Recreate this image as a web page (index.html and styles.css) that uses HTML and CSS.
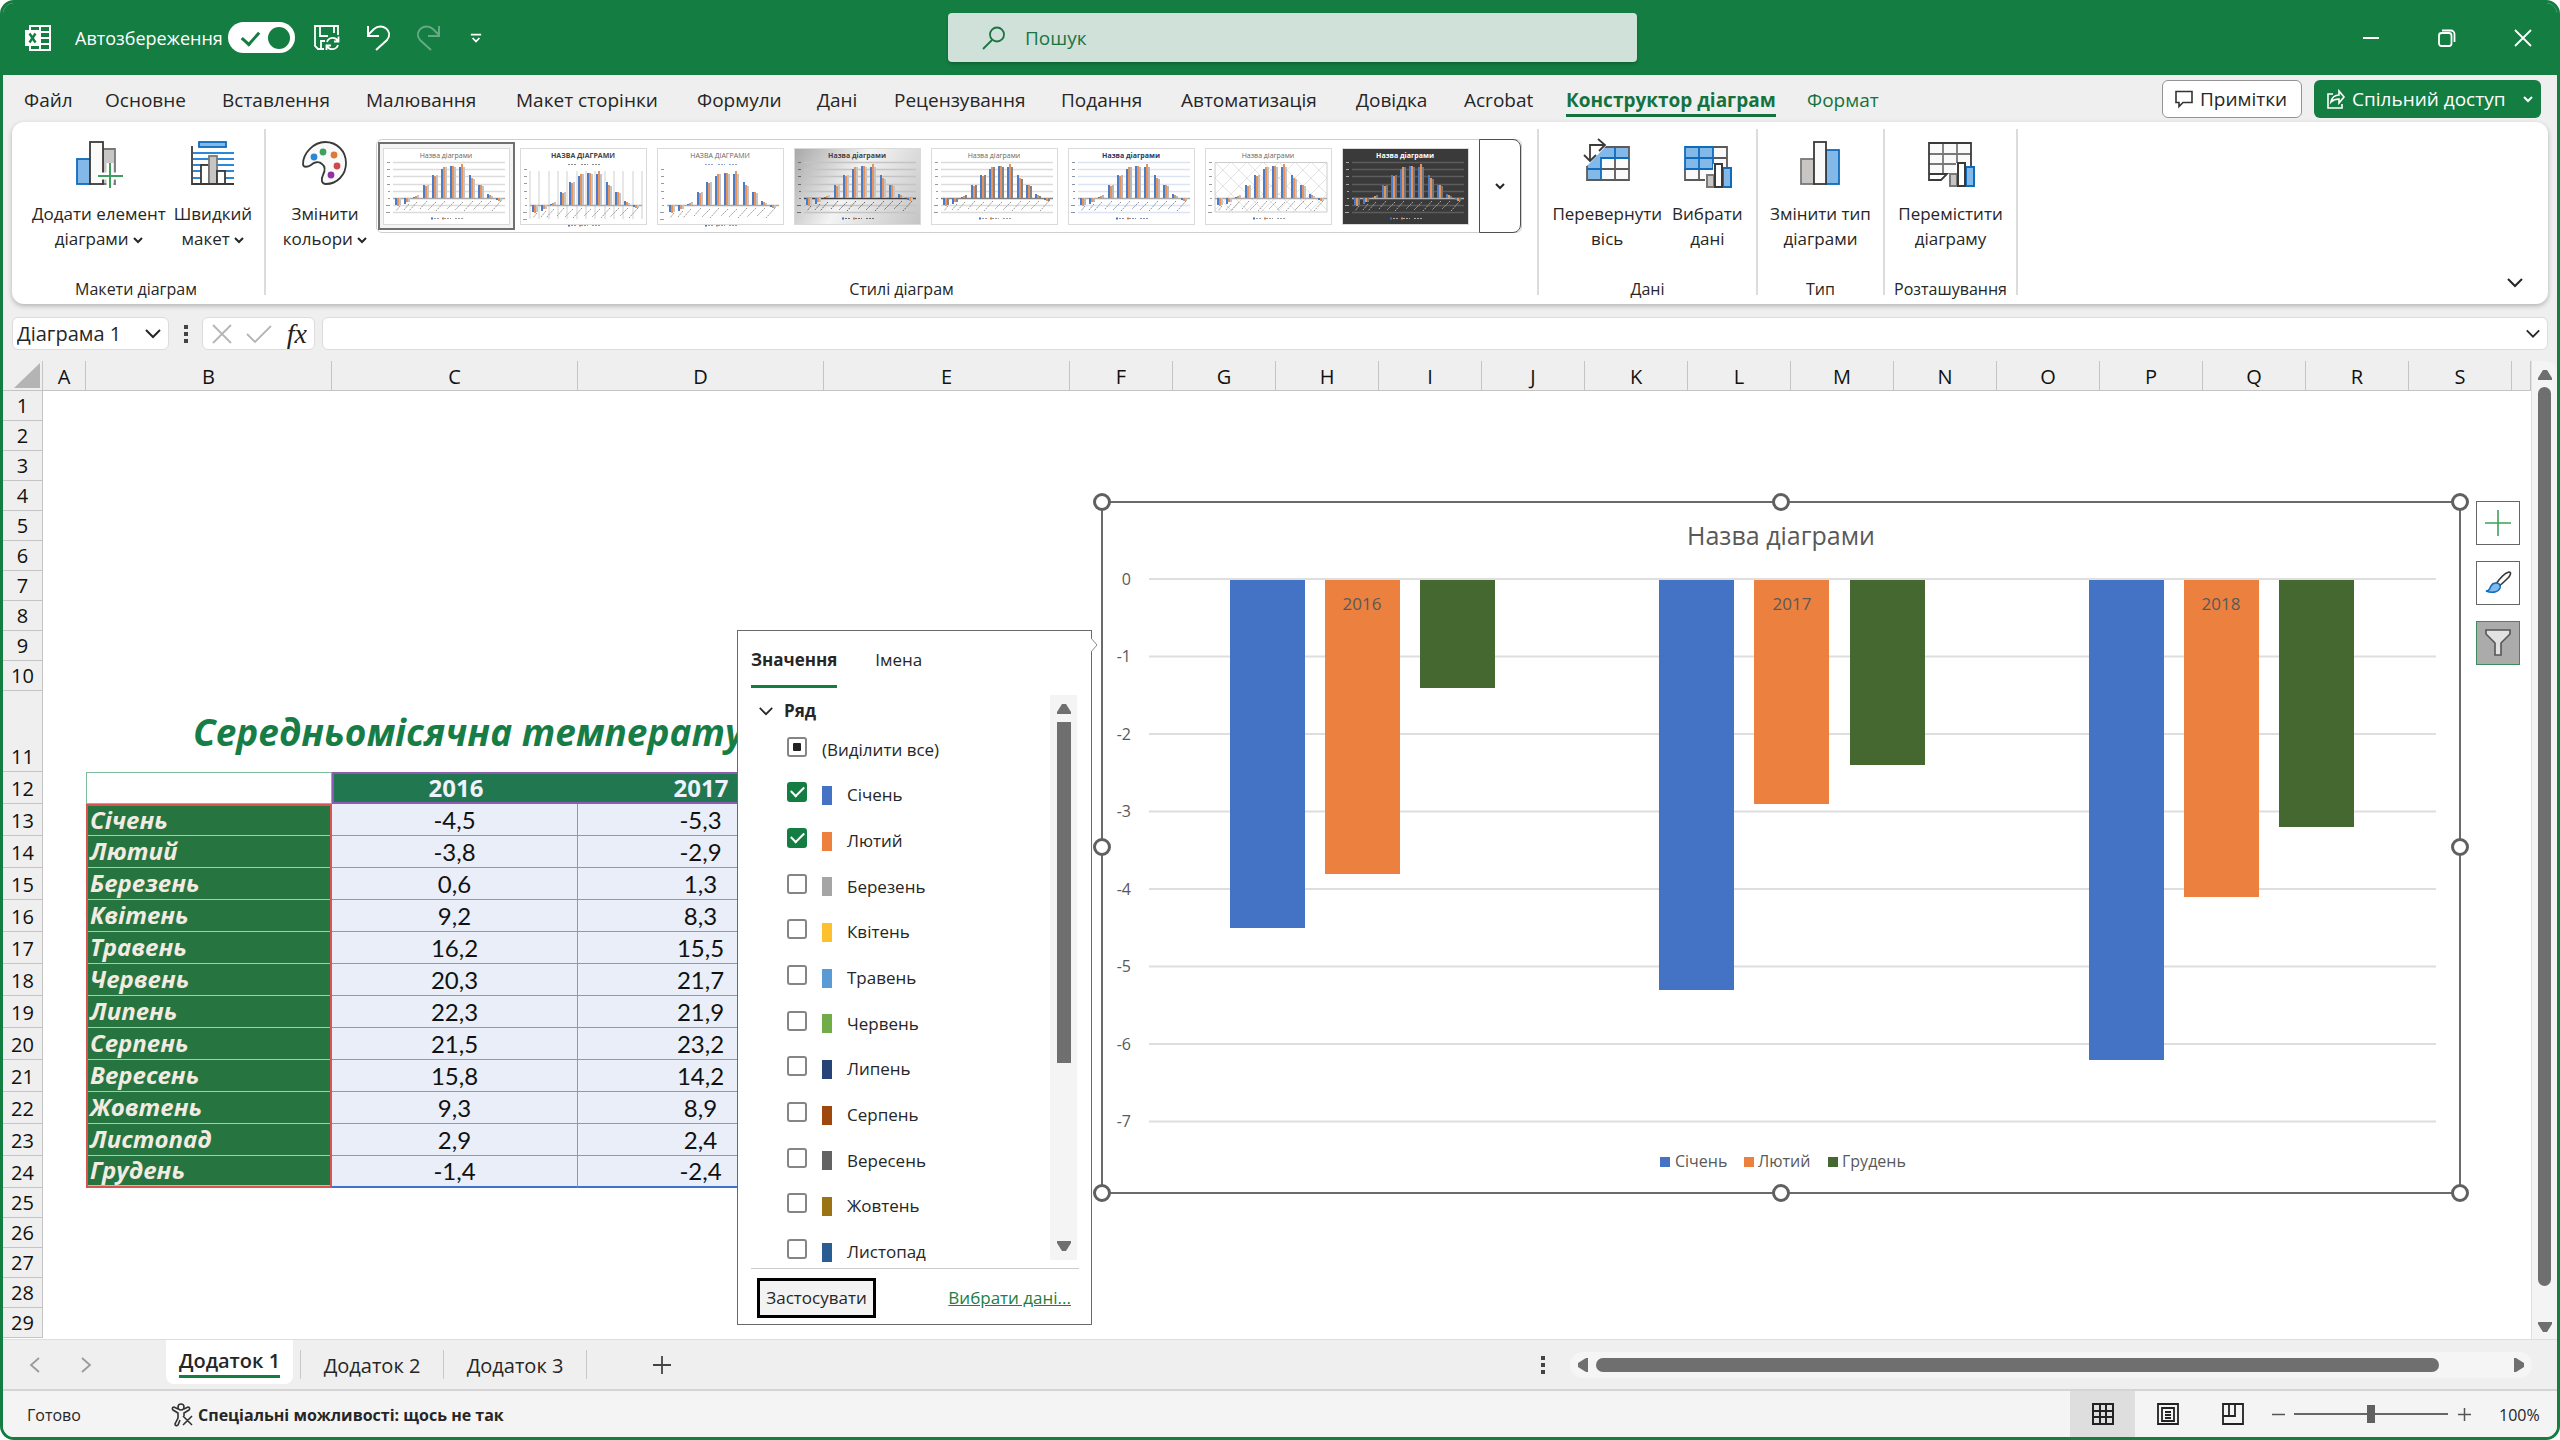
FILE: index.html
```html
<!DOCTYPE html>
<html lang="uk">
<head>
<meta charset="utf-8">
<title>Excel</title>
<link rel="stylesheet" href="styles.css">
</head>
<body>
<svg class="defs" aria-hidden="true">
  <symbol id="chev" viewBox="0 0 10 10"><path d="M1 3l4 4 4-4" fill="none" stroke="currentColor" stroke-width="2"/></symbol>
  <symbol id="chev-wide" viewBox="0 0 18 10"><path d="M2 1l7 7 7-7" fill="none" stroke="currentColor" stroke-width="2"/></symbol>
  <symbol id="mini-grid" viewBox="0 0 125 75"><path d="M9 13.500H121M9 20.500H121M9 27.500H121M9 35.500H121M9 42.500H121M9 56.500H121M9 63.500H121" fill="none" stroke="var(--grid)" stroke-width="1.500"/></symbol>
  <symbol id="mini-bars" viewBox="0 0 125 75">
    <path d="M9 49.500H121" stroke="var(--axis)" stroke-width="1.500"/>
    <path d="M12 49v7M21 49v6M30 49v-1M40 49v-13M49 49v-23M58 49v-29M67 49v-32M76 49v-31M86 49v-23M95 49v-13M104 49v-4M113 49v2" stroke="#4a7cc9" stroke-width="2"/>
    <path d="M14 49v8M23 49v4M32 49v-2M42 49v-12M51 49v-22M60 49v-31M69 49v-32M78 49v-34M88 49v-20M97 49v-13M106 49v-3M115 49v3" stroke="#e6935c" stroke-width="2"/>
    <path d="M16 49v7M25 49v4M34 49v-3M44 49v-13M53 49v-23M62 49v-31M71 49v-31M80 49v-31M90 49v-19M99 49v-12M108 49v-2M117 49v3" stroke="var(--third)" stroke-width="2"/>
    <path d="M16 57l-4 5M25 55l-5 6M33 53l-8 9M43 52l-7 8M52 53l-8 8M61 52l-9 10M70 53l-7 7M79 53l-8 8M89 52l-9 10M98 52l-9 9M107 52l-8 8M117 52l-9 10" fill="none" stroke="var(--ink)" stroke-dasharray="2 1"/>
    <path d="M3 13.500h3M3 20.500h3M3 27.500h3M3 35.500h3M4 42.500h2M4 49.500h2M2 56.500h4M2 63.500h4" stroke="var(--ink)"/>
    <path d="M47 69.500h8M60 69.500h7M71 69.500h9" stroke="var(--ink)" stroke-dasharray="2 1"/>
    <path d="M47 69.500h2" stroke="#4472c4" stroke-width="2"/><path d="M58 69.500h2" stroke="#ed7d31" stroke-width="2"/>
  </symbol>
  <symbol id="small-chart" viewBox="0 0 26 26"><path d="M-1 13h8v-11h10v4h9v20H-1z" fill="#fff"/><rect x="1" y="13" width="7" height="12" fill="#c8c6c4" stroke="#7a7876" stroke-width="2"/><rect x="17" y="6" width="8" height="19" fill="#83b9e9" stroke="#0f6cbd" stroke-width="2"/><rect x="9" y="2" width="7" height="23" fill="#fff" stroke="#3b3a39" stroke-width="2"/></symbol>
</svg>

<div class="window">
  <header class="titlebar">
    <div class="quick">
      <svg class="logo" width="26" height="26" viewBox="0 0 26 26"><path d="M5 1h20v24H5z" fill="none" stroke="#fff" stroke-width="2"/><path d="M15 1v24M15 7h10M15 13h10M15 19h10" stroke="#fff" stroke-width="2"/><path d="M0 5h15v16H0z" fill="#fff"/><path d="M4.500 8.500l6 9M10.500 8.500l-6 9" stroke="#147d41" stroke-width="2.400"/></svg>
      <label class="autosave" for="autosave">Автозбереження</label>
      <input class="toggle" type="checkbox" id="autosave" checked>
      <button class="qbtn" aria-label="Зберегти"><svg width="26" height="26" viewBox="0 0 26 26" fill="none" stroke="#fff" stroke-width="1.800"><path d="M10 24H4L1 21V1h23v9M6 1v10h8M20 1v7M7 24v-8h4"/><path d="M24 16a6 6 0 0 0-11 1M13 21a6 6 0 0 0 11-1M24.500 11.500V16.500H20M12.500 25V20.500H17"/></svg></button>
      <button class="qbtn" aria-label="Скасувати"><svg width="26" height="26" viewBox="0 0 26 26" fill="none" stroke="#fff" stroke-width="2"><path d="M3 1v10h11M3 10l6-6c8-7 20 2 13 11L11 25"/></svg></button>
      <button class="qbtn faded" aria-label="Повторити"><svg width="26" height="26" viewBox="0 0 26 26" fill="none" stroke="#fff" stroke-width="2"><path d="M23 1v10H12M23 10l-6-6C9-3-3 6 4 15l11 10"/></svg></button>
      <button class="qbtn narrow" aria-label="Налаштувати"><svg width="12" height="12" viewBox="0 0 14 12" fill="none" stroke="#fff" stroke-width="2"><path d="M1 2h12M3 6l4 4 4-4"/></svg></button>
    </div>
    <div class="search">
      <svg width="24" height="24" viewBox="0 0 24 24" fill="none" stroke="#1b7444" stroke-width="1.800"><circle cx="15" cy="8.500" r="7"/><path d="M10 14L1 23"/></svg>
      <input type="text" placeholder="Пошук" aria-label="Пошук">
    </div>
    <div class="winctl">
      <button aria-label="Згорнути"><svg width="16" height="16" viewBox="0 0 16 16"><path d="M0 8h16" stroke="#fff" stroke-width="2"/></svg></button>
      <button aria-label="Відновити"><svg width="18" height="18" viewBox="0 0 18 18" fill="none" stroke="#fff" stroke-width="1.800"><rect x="1" y="4" width="12.500" height="13" rx="2.500"/><path d="M4 1.500h9a3.500 3.500 0 0 1 3.500 3.500v8"/></svg></button>
      <button aria-label="Закрити"><svg width="18" height="18" viewBox="0 0 18 18"><path d="M1 1l16 16M17 1L1 17" stroke="#fff" stroke-width="1.800"/></svg></button>
    </div>
  </header>

  <nav class="tabs">
    <div class="tablist">
      <a href="#">Файл</a><a href="#">Основне</a><a href="#">Вставлення</a><a href="#">Малювання</a><a href="#">Макет сторінки</a><a href="#">Формули</a><a href="#">Дані</a><a href="#">Рецензування</a><a href="#">Подання</a><a href="#">Автоматизація</a><a href="#">Довідка</a><a href="#">Acrobat</a><a href="#" class="active">Конструктор діаграм</a><a href="#" class="ctx">Формат</a>
    </div>
    <button class="comments"><svg width="18" height="18" viewBox="0 0 18 18" fill="none" stroke="#333" stroke-width="1.600"><path d="M1 1.500h16v11H8l-4 4v-4H1z"/></svg>Примітки</button>
    <button class="share"><svg width="18" height="20" viewBox="0 0 18 20" fill="none" stroke="#fff" stroke-width="1.600"><path d="M6 5H1v14h14v-4M4 13c1-5 4-7 8-7V2l5 6-5 6v-4c-4 0-6 1-8 3z"/></svg>Спільний доступ<svg class="share-chev" width="10" height="10"><use href="#chev"/></svg></button>
  </nav>

  <section class="ribbon">
    <div class="group g-layouts">
      <div class="tools">
        <button class="tool"><svg width="48" height="48" viewBox="0 0 48 48"><rect x="2" y="20" width="13" height="25" fill="#83b9e9" stroke="#0f6cbd" stroke-width="1.800"/><path d="M28 10h12v35H28z" fill="#c8c6c4" stroke="#7a7876" stroke-width="1.800"/><rect x="15" y="3" width="13" height="42" fill="#fafafa" stroke="#3b3a39" stroke-width="1.800"/><path d="M35 24v26M22 37h27" stroke="#fff" stroke-width="7"/><path d="M35 24v25M23 37h25" stroke="#3da15b" stroke-width="2"/></svg><span>Додати елемент<br>діаграми <svg class="c" width="10" height="10"><use href="#chev"/></svg></span></button>
        <button class="tool"><svg width="48" height="48" viewBox="0 0 48 48"><rect x="10" y="3" width="27" height="5" fill="#83b9e9" stroke="#0f6cbd" stroke-width="1.800"/><path d="M4 14h41M4 20h41M4 26h41M4 32h41M4 39h41" stroke="#2b88d8" stroke-width="1.800"/><rect x="12" y="26" width="8" height="19" fill="#fff" stroke="#3b3a39" stroke-width="1.800"/><rect x="20" y="17" width="8" height="28" fill="#c8c6c4" stroke="#7a7876" stroke-width="1.800"/><rect x="28" y="32" width="8" height="13" fill="#fff" stroke="#3b3a39" stroke-width="1.800"/><path d="M3 7v38h42" fill="none" stroke="#3b3a39" stroke-width="1.800"/></svg><span>Швидкий<br>макет <svg class="c" width="10" height="10"><use href="#chev"/></svg></span></button>
      </div>
      <p>Макети діаграм</p>
    </div>
    <div class="group g-styles">
      <div class="tools">
        <button class="tool"><svg width="48" height="48" viewBox="0 0 48 48"><path d="M24 3C13 3 2 14 2 25c0 4 5 3 8 1 3-3 8-4 11-1 4 3 3 7 1 11-2 4-2 9 3 9 11 0 20-9 20-21S36 3 24 3z" fill="#fafafa" stroke="#3b3a39" stroke-width="1.800"/><circle cx="13" cy="18" r="3.400" fill="#2b88d8"/><circle cx="22" cy="13" r="3.400" fill="#3da15b"/><circle cx="33" cy="16" r="3.400" fill="#dd7a3a"/><circle cx="36" cy="27" r="3.400" fill="#d0474c"/><circle cx="30" cy="36" r="3.400" fill="#9030a8"/></svg><span>Змінити<br>кольори <svg class="c" width="10" height="10"><use href="#chev"/></svg></span></button>
        <div class="gallery">
          <button class="style selected" aria-label="Стиль 1"><svg class="mini" viewBox="0 0 125 75"><text x="62" y="9">Назва діаграми</text><use href="#mini-grid"/><use href="#mini-bars"/></svg></button>
          <button class="style" aria-label="Стиль 2"><svg class="mini" viewBox="0 0 125 75"><text x="62" y="9" class="b">НАЗВА ДІАГРАМИ</text><path d="M9 22v48M18 22v48M28 22v48M37 22v48M46 22v48M56 22v48M65 22v48M74 22v48M84 22v48M93 22v48M102 22v48M112 22v48M121 22v48" stroke="#d0d0d0"/><path d="M47 15.500h8M60 15.500h7M71 15.500h9" stroke="#888" stroke-dasharray="2 1"/><use href="#mini-bars" y="7"/></svg></button>
          <button class="style" aria-label="Стиль 3"><svg class="mini" viewBox="0 0 125 75"><text x="62" y="9">НАЗВА ДІАГРАМИ</text><path d="M47 15.500h8M60 15.500h7M71 15.500h9" stroke="#8aa4cc" stroke-dasharray="2 1"/><use href="#mini-bars" y="7"/></svg></button>
          <button class="style" aria-label="Стиль 4"><svg class="mini silver" viewBox="0 0 125 75"><text x="62" y="9" class="b">Назва діаграми</text><use href="#mini-grid"/><use href="#mini-bars"/></svg></button>
          <button class="style" aria-label="Стиль 5"><svg class="mini thick" viewBox="0 0 125 75"><text x="62" y="9">Назва діаграми</text><use href="#mini-grid"/><use href="#mini-bars"/></svg></button>
          <button class="style" aria-label="Стиль 6"><svg class="mini blue" viewBox="0 0 125 75"><text x="62" y="9" class="b">Назва діаграми</text><use href="#mini-grid"/><use href="#mini-bars"/></svg></button>
          <button class="style" aria-label="Стиль 7"><svg class="mini" viewBox="0 0 125 75"><text x="62" y="9">Назва діаграми</text><path d="M9 13L59 63M25 13L75 63M41 13L91 63M57 13l50 50M73 13l48 48M89 13l32 32M105 13l16 16M9 29l34 34M9 45l18 18M25 13L9 29M41 13L9 45M57 13L9 61M73 13L23 63M89 13L39 63M105 13L55 63M121 13L71 63M121 29L87 63M121 45l-18 18" stroke="#e4e4e4"/><path d="M9 13.500H121V63H9z" fill="none" stroke="#ccc"/><use href="#mini-bars"/></svg></button>
          <button class="style" aria-label="Стиль 8"><svg class="mini dark" viewBox="0 0 125 75"><text x="62" y="9" class="b">Назва діаграми</text><use href="#mini-grid"/><use href="#mini-bars"/></svg></button>
          <button class="more" aria-label="Додатково"><svg width="10" height="10"><use href="#chev"/></svg></button>
        </div>
      </div>
      <p>Стилі діаграм</p>
    </div>
    <div class="group g-data">
      <div class="tools">
        <button class="tool"><svg width="50" height="48" viewBox="0 0 50 48"><rect x="5" y="8" width="42" height="33" fill="#fafafa"/><path d="M5 8h42v11H19v22H5z" fill="#83b9e9"/><path d="M5 41h42V8H5zM19 30h28M33 19v22" fill="none" stroke="#5b5a59" stroke-width="1.800"/><path d="M19 41V19h28M5 30h14M33 8v11" fill="none" stroke="#0f6cbd" stroke-width="1.800"/><path d="M0 4h27L5 27H0z" fill="#fff"/><path d="M8 21V6h15M16 0l7 6-6 6M2 16l6 6 6-6" fill="none" stroke="#3b3a39" stroke-width="1.800"/></svg><span>Перевернути<br>вісь</span></button>
        <button class="tool"><svg width="50" height="48" viewBox="0 0 50 48"><path d="M3 8h42v32H3z" fill="#fafafa"/><path d="M3 8h28v22H3z" fill="#83b9e9"/><path d="M45 28V8H31M31 19h14M3 30v11h20M17 30v11" fill="none" stroke="#5b5a59" stroke-width="1.800"/><path d="M3 8h28v22H3zM3 19h28M17 8v22" fill="none" stroke="#0f6cbd" stroke-width="1.800"/><use href="#small-chart" x="24" y="23" width="26" height="26"/></svg><span>Вибрати<br>дані</span></button>
      </div>
      <p>Дані</p>
    </div>
    <div class="group g-type">
      <div class="tools">
        <button class="tool"><svg width="48" height="48" viewBox="0 0 48 48"><rect x="5" y="20" width="13" height="25" fill="#c8c6c4" stroke="#7a7876" stroke-width="1.800"/><rect x="30" y="11" width="13" height="34" fill="#83b9e9" stroke="#0f6cbd" stroke-width="1.800"/><rect x="18" y="3" width="12" height="42" fill="#fafafa" stroke="#3b3a39" stroke-width="1.800"/></svg><span>Змінити тип<br>діаграми</span></button>
      </div>
      <p>Тип</p>
    </div>
    <div class="group g-place">
      <div class="tools">
        <button class="tool"><svg width="50" height="48" viewBox="0 0 50 48"><path d="M4 4h42v22H30v9H4z" fill="#fafafa"/><path d="M4 15h42M4 25h28M18 4v31M32 4v22" fill="none" stroke="#7a7876" stroke-width="1.800"/><path d="M46 28V4H4v37h12l6-6H4" fill="none" stroke="#3b3a39" stroke-width="1.800"/><use href="#small-chart" x="24" y="22" width="26" height="26"/></svg><span>Перемістити<br>діаграму</span></button>
      </div>
      <p>Розташування</p>
    </div>
    <button class="collapse" aria-label="Згорнути стрічку"><svg width="18" height="10"><use href="#chev-wide"/></svg></button>
  </section>

  <div class="formula">
    <div class="namebox"><input type="text" value="Діаграма 1" aria-label="Ім'я"><svg width="18" height="10"><use href="#chev-wide"/></svg></div>
    <span class="dots"><i></i><i></i><i></i></span>
    <div class="fxbox">
      <button aria-label="Скасувати"><svg width="20" height="20" viewBox="0 0 20 20"><path d="M1 1l18 18M19 1L1 19" stroke="#b5b5b5" stroke-width="1.800"/></svg></button>
      <button aria-label="Ввести"><svg width="26" height="18" viewBox="0 0 26 18"><path d="M1 9l8 8L25 1" fill="none" stroke="#b5b5b5" stroke-width="1.800"/></svg></button>
      <button class="fx" aria-label="Вставити функцію">fx</button>
    </div>
    <div class="fbar"><input type="text" aria-label="Рядок формул"><svg width="16" height="10" viewBox="0 0 18 10"><use href="#chev-wide"/></svg></div>
  </div>

  <main class="workspace">
    <div class="sheet">
      <table class="grid">
        <colgroup><col class="c-row"><col class="c-a"><col class="c-wide"><col class="c-wide"><col class="c-wide"><col class="c-wide"><col class="c-n" span="14"><col></colgroup>
        <thead><tr><th class="corner"><svg width="26" height="25" viewBox="0 0 26 25"><path d="M26 0v25H0z" fill="#b4b4b4"/></svg></th><th>A</th><th>B</th><th>C</th><th>D</th><th>E</th><th>F</th><th>G</th><th>H</th><th>I</th><th>J</th><th>K</th><th>L</th><th>M</th><th>N</th><th>O</th><th>P</th><th>Q</th><th>R</th><th>S</th><th></th></tr></thead>
        <tbody>
          <tr><th>1</th><td colspan="20"></td></tr>
          <tr><th>2</th><td colspan="20"></td></tr>
          <tr><th>3</th><td colspan="20"></td></tr>
          <tr><th>4</th><td colspan="20"></td></tr>
          <tr><th>5</th><td colspan="20"></td></tr>
          <tr><th>6</th><td colspan="20"></td></tr>
          <tr><th>7</th><td colspan="20"></td></tr>
          <tr><th>8</th><td colspan="20"></td></tr>
          <tr><th>9</th><td colspan="20"></td></tr>
          <tr><th>10</th><td colspan="20"></td></tr>
          <tr class="heading"><th>11</th><td></td><td colspan="4" class="title">Середньомісячна температура</td><td colspan="15"></td></tr>
          <tr class="years"><th>12</th><td></td><td class="blank"></td><td class="y first">2016</td><td class="y">2017</td><td class="y">2018</td><td colspan="15"></td></tr>
          <tr class="d"><th>13</th><td></td><td class="m top">Січень</td><td>-4,5</td><td>-5,3</td><td></td></tr>
          <tr class="d"><th>14</th><td></td><td class="m">Лютий</td><td>-3,8</td><td>-2,9</td><td></td></tr>
          <tr class="d"><th>15</th><td></td><td class="m">Березень</td><td>0,6</td><td>1,3</td><td></td></tr>
          <tr class="d"><th>16</th><td></td><td class="m">Квітень</td><td>9,2</td><td>8,3</td><td></td></tr>
          <tr class="d"><th>17</th><td></td><td class="m">Травень</td><td>16,2</td><td>15,5</td><td></td></tr>
          <tr class="d"><th>18</th><td></td><td class="m">Червень</td><td>20,3</td><td>21,7</td><td></td></tr>
          <tr class="d"><th>19</th><td></td><td class="m">Липень</td><td>22,3</td><td>21,9</td><td></td></tr>
          <tr class="d"><th>20</th><td></td><td class="m">Серпень</td><td>21,5</td><td>23,2</td><td></td></tr>
          <tr class="d"><th>21</th><td></td><td class="m">Вересень</td><td>15,8</td><td>14,2</td><td></td></tr>
          <tr class="d"><th>22</th><td></td><td class="m">Жовтень</td><td>9,3</td><td>8,9</td><td></td></tr>
          <tr class="d"><th>23</th><td></td><td class="m">Листопад</td><td>2,9</td><td>2,4</td><td></td></tr>
          <tr class="d last"><th>24</th><td></td><td class="m">Грудень</td><td>-1,4</td><td>-2,4</td><td></td></tr>
          <tr><th>25</th><td colspan="20"></td></tr>
          <tr><th>26</th><td colspan="20"></td></tr>
          <tr><th>27</th><td colspan="20"></td></tr>
          <tr><th>28</th><td colspan="20"></td></tr>
          <tr><th>29</th><td colspan="20"></td></tr>
        </tbody>
      </table>

      <svg class="chart" width="1378" height="712" viewBox="1092 491 1378 712">
        <rect x="1102" y="502" width="1358" height="691" fill="#fff" stroke="#6a6a6a" stroke-width="2"/>
        <g stroke="#dedede" stroke-width="2"><path d="M1149 579H2436M1149 656.500H2436M1149 734H2436M1149 811.500H2436M1149 889H2436M1149 966.500H2436M1149 1044H2436M1149 1121.500H2436"/></g>
        <g fill="#4472c4"><rect x="1230" y="580" width="75" height="348"/><rect x="1659" y="580" width="75" height="410"/><rect x="2089" y="580" width="75" height="480"/></g>
        <g fill="#ec803e"><rect x="1325" y="580" width="75" height="294"/><rect x="1754" y="580" width="75" height="224"/><rect x="2184" y="580" width="75" height="317"/></g>
        <g fill="#44682f"><rect x="1420" y="580" width="75" height="108"/><rect x="1850" y="580" width="75" height="185"/><rect x="2279" y="580" width="75" height="247"/></g>
        <text class="ct" x="1781" y="545">Назва діаграми</text>
        <g class="val"><text x="1131" y="585">0</text><text x="1131" y="662">-1</text><text x="1131" y="740">-2</text><text x="1131" y="817">-3</text><text x="1131" y="895">-4</text><text x="1131" y="972">-5</text><text x="1131" y="1050">-6</text><text x="1131" y="1127">-7</text></g>
        <g class="cat"><text x="1362" y="610">2016</text><text x="1792" y="610">2017</text><text x="2221" y="610">2018</text></g>
        <rect x="1660" y="1157" width="10" height="10" fill="#4472c4"/><rect x="1744" y="1157" width="10" height="10" fill="#ec803e"/><rect x="1828" y="1157" width="10" height="10" fill="#44682f"/>
        <g class="leg"><text x="1675" y="1167">Січень</text><text x="1758" y="1167">Лютий</text><text x="1842" y="1167">Грудень</text></g>
        <g fill="#fff" stroke="#606060" stroke-width="3"><circle cx="1102" cy="502" r="7.500"/><circle cx="1781" cy="502" r="7.500"/><circle cx="2460" cy="502" r="7.500"/><circle cx="1102" cy="847" r="7.500"/><circle cx="2460" cy="847" r="7.500"/><circle cx="1102" cy="1193" r="7.500"/><circle cx="1781" cy="1193" r="7.500"/><circle cx="2460" cy="1193" r="7.500"/></g>
      </svg>

      <div class="chart-tools">
        <button aria-label="Елементи діаграми"><svg width="26" height="26" viewBox="0 0 26 26"><path d="M13 0v26M0 13h26" stroke="#3da15b" stroke-width="1.600"/></svg></button>
        <button aria-label="Стилі діаграми"><svg width="26" height="26" viewBox="0 0 26 26"><path d="M11 14C15 8 20 3 24 2c3 0 1 4-1 6-3 3-6 6-9 8z" fill="#fafafa" stroke="#3b3a39" stroke-width="1.600"/><path d="M11 13c3 0 5 2 4 5-2 5-9 5-14 3 4 0 3-2 5-5 1-2 3-3 5-3z" fill="#83b9e9" stroke="#0f6cbd" stroke-width="1.600"/></svg></button>
        <button class="on" aria-label="Фільтри діаграми"><svg width="26" height="28" viewBox="0 0 26 28"><path d="M1 1h24v4L16 14v12h-6V14L1 5z" fill="#e2e2e2" stroke="#555" stroke-width="1.600"/></svg></button>
      </div>

      <div class="filter">
        <svg class="notch" width="7" height="14" viewBox="0 0 7 14"><path d="M0 0l6 7-6 7" fill="#fff" stroke="#8a8a8a"/></svg>
        <div class="ftabs"><button class="active">Значення</button><button>Імена</button></div>
        <div class="fbody">
          <div class="flist">
            <button class="fgroup"><svg width="16" height="9" viewBox="0 0 18 10"><use href="#chev-wide"/></svg>Ряд</button>
            <div class="fitems">
              <label class="all"><input type="checkbox" class="mixed">(Виділити все)</label>
              <label><input type="checkbox" checked><i class="s1"></i>Січень</label>
              <label><input type="checkbox" checked><i class="s2"></i>Лютий</label>
              <label><input type="checkbox"><i class="s3"></i>Березень</label>
              <label><input type="checkbox"><i class="s4"></i>Квітень</label>
              <label><input type="checkbox"><i class="s5"></i>Травень</label>
              <label><input type="checkbox"><i class="s6"></i>Червень</label>
              <label><input type="checkbox"><i class="s7"></i>Липень</label>
              <label><input type="checkbox"><i class="s8"></i>Серпень</label>
              <label><input type="checkbox"><i class="s9"></i>Вересень</label>
              <label><input type="checkbox"><i class="s10"></i>Жовтень</label>
              <label><input type="checkbox"><i class="s11"></i>Листопад</label>
            </div>
          </div>
          <div class="fscroll"><svg width="14" height="11" viewBox="0 0 14 11"><path d="M5 1h4l5 8v2H0V9z" fill="#6f6f6f"/></svg><span class="thumb"></span><svg width="14" height="11" viewBox="0 0 14 11"><path d="M0 0h14v2L9 10H5L0 2z" fill="#6f6f6f"/></svg></div>
        </div>
        <div class="ffoot"><button>Застосувати</button><a href="#">Вибрати дані...</a></div>
      </div>
    </div>
    <div class="vscroll"><svg width="14" height="11" viewBox="0 0 14 11"><path d="M5 1h4l5 8v2H0V9z" fill="#6f6f6f"/></svg><span class="thumb"></span><svg width="14" height="11" viewBox="0 0 14 11"><path d="M0 0h14v2L9 10H5L0 2z" fill="#6f6f6f"/></svg></div>
  </main>

  <div class="sheetbar">
    <button class="nav" aria-label="Попередній аркуш"><svg width="10" height="16" viewBox="0 0 10 16"><path d="M9 1L1 8l8 7" fill="none" stroke="#9a9a9a" stroke-width="1.800"/></svg></button>
    <button class="nav" aria-label="Наступний аркуш"><svg width="10" height="16" viewBox="0 0 10 16"><path d="M1 1l8 7-8 7" fill="none" stroke="#9a9a9a" stroke-width="1.800"/></svg></button>
    <button class="stab active"><span>Додаток 1</span></button>
    <button class="stab">Додаток 2</button>
    <button class="stab">Додаток 3</button>
    <button class="add" aria-label="Новий аркуш"><svg width="18" height="18" viewBox="0 0 18 18"><path d="M9 0v18M0 9h18" stroke="#444" stroke-width="1.800"/></svg></button>
    <span class="dots"><i></i><i></i><i></i></span>
    <div class="hscroll"><svg width="11" height="14" viewBox="0 0 11 14"><path d="M11 0H9L1 5v4l8 5h2z" fill="#6f6f6f"/></svg><span class="thumb"></span><svg width="11" height="14" viewBox="0 0 11 14"><path d="M0 0h2l8 5v4l-8 5H0z" fill="#6f6f6f"/></svg></div>
  </div>

  <footer class="status">
    <span class="ready">Готово</span>
    <button class="access"><svg width="22" height="24" viewBox="0 0 22 24" fill="none" stroke="#333" stroke-width="1.600"><circle cx="10" cy="4" r="3"/><path d="M7 6L3 4C1 4 1 6 2 7l5 3v5l-3 6c0 2 2 2 3 1l2-5M13 6l4-2c2 0 2 2 1 3l-5 3v3M12 13l9 9M21 13l-9 9"/></svg>Спеціальні можливості: щось не так</button>
    <div class="views">
      <button class="on" aria-label="Звичайний"><svg width="22" height="22" viewBox="0 0 22 22" fill="none" stroke="#222" stroke-width="2"><path d="M1 1h20v20H1zM8 1v20M14 1v20M1 8h20M1 14h20"/></svg></button>
      <button aria-label="Розмітка сторінки"><svg width="22" height="22" viewBox="0 0 22 22" fill="none" stroke="#222" stroke-width="1.800"><path d="M1 1h20v20H1zM5 5h12v13H5zM8 9h6M8 12h6M8 15h6"/></svg></button>
      <button aria-label="Сторінковий режим"><svg width="22" height="22" viewBox="0 0 22 22" fill="none" stroke="#222" stroke-width="1.800"><path d="M1 1h20v20H1zM1 13h12V1M7 1v12"/></svg></button>
    </div>
    <button class="zbtn" aria-label="Зменшити"><svg width="13" height="13" viewBox="0 0 13 13"><path d="M0 6.500h13" stroke="#555" stroke-width="1.500"/></svg></button>
    <input class="zoom" type="range" min="0" max="200" value="100" aria-label="Масштаб">
    <button class="zbtn" aria-label="Збільшити"><svg width="13" height="13" viewBox="0 0 13 13"><path d="M0 6.500h13M6.500 0v13" stroke="#555" stroke-width="1.500"/></svg></button>
    <span class="pct">100%</span>
  </footer>
</div>
</body>
</html>
```
FILE: styles.css
```css
* { box-sizing: border-box; }
body { margin: 0; background: #fff; color: #262626; font: 18px/24px "Open Sans", "Noto Sans", sans-serif; }
button { border: 0; padding: 0; background: none; font: inherit; color: inherit; }
input { font: inherit; color: inherit; border: 0; outline: 0; background: none; margin: 0; padding: 0; }
a { color: inherit; text-decoration: none; }
svg { display: block; flex: none; overflow: visible; }
.defs { position: absolute; width: 0; height: 0; }

.window { min-height: 100vh; display: flex; flex-direction: column; border: 3px solid #147d41; border-radius: 14px; background: #efefef; overflow: hidden; }

/* Title bar */
.titlebar { display: grid; grid-template-columns: 1fr 689px 920px; align-items: center; height: 72px; padding-bottom: 3px; background: #147d41; color: #fff; }
.quick { display: flex; align-items: center; padding-left: 22px; }
.autosave { margin: 0 9px 0 24px; width: 144px; white-space: nowrap; }
.toggle { appearance: none; position: relative; width: 67px; height: 31px; border-radius: 16px; background: #fff; margin-right: 6px; }
.toggle::before { content: ""; position: absolute; right: 5px; top: 5px; width: 22px; height: 22px; border-radius: 50%; background: #147d41; }
.toggle::after { content: ""; position: absolute; left: 17px; top: 6px; width: 8px; height: 14px; border: solid #147d41; border-width: 0 3px 3px 0; transform: rotate(42deg); }
.qbtn { display: grid; place-items: center; width: 51px; height: 40px; }
.narrow { width: 43px; }
.faded { opacity: .35; }
.search { display: flex; align-items: center; gap: 19px; height: 49px; padding: 0 34px; border-radius: 4px; background: #d0e1d9; box-shadow: 0 2px 3px rgba(0,0,0,.2); }
.search input { flex: 1; font-size: 19px; color: #1b7444; }
.search input::placeholder { color: #1b7444; opacity: 1; }
.winctl { display: flex; justify-content: flex-end; gap: 8px; }
.winctl button { display: grid; place-items: center; width: 68px; height: 60px; }

/* Ribbon tabs */
.tabs { display: flex; align-items: center; height: 47px; padding: 0 16px 0 21px; font-size: 19px; }
.tablist { flex: 1; display: grid; grid-template-columns: 81px 117px 144px 150px 181px 120px 77px 167px 120px 175px 108px 102px 241px 72px; white-space: nowrap; }
.tablist a { justify-self: start; height: 32px; line-height: 30px; margin-top: 5px; }
.tablist .active { font-weight: 700; color: #147240; border-bottom: 3px solid #147240; }
.tablist .ctx { color: #147240; }
.comments, .share { display: flex; align-items: center; gap: 7px; height: 38px; border-radius: 6px; white-space: nowrap; }
.comments { width: 140px; padding-left: 12px; background: #fff; border: 1px solid #949494; margin-right: 12px; }
.share { width: 227px; padding-left: 13px; background: #147d41; color: #fff; }
.share-chev { margin: 0 8px 0 auto; }

/* Ribbon */
.ribbon { display: flex; height: 182px; margin: 0 9px; padding: 7px 0 9px; border-radius: 12px; background: #fff; box-shadow: 0 2px 5px rgba(0,0,0,.25); }
.group { display: flex; flex-direction: column; justify-content: space-between; border-right: 2px solid #dcdcdc; }
.group p { margin: 0; text-align: center; font-size: 16px; line-height: 12px; }
.tools { display: flex; justify-content: center; padding-top: 10px; }
.tool { display: flex; flex-direction: column; align-items: center; gap: 14px; font-size: 17px; line-height: 25px; white-space: nowrap; }
.tool .c { display: inline-block; }
.g-layouts { width: 254px; }
.g-layouts .tools { gap: 8px; padding-left: 8px; }
.g-layouts p { padding-right: 4px; }
.g-styles { width: 1273px; }
.g-styles .tools { justify-content: flex-start; padding-left: 14px; }
.g-styles .tool { width: 90px; }
.g-data { width: 219px; }
.g-data .tools { gap: 10px; }
.g-type { width: 127px; }
.g-place { width: 133px; }
.collapse { margin-left: auto; align-self: flex-end; padding: 0 24px 7px 0; }

.gallery { display: flex; align-items: center; height: 94px; margin-left: 6px; border: 1px solid #cfcfcf; border-radius: 6px; padding-left: 1px; }
.style { display: grid; place-items: center; width: 137px; height: 88px; }
.style.selected { border: 2px solid #707070; background: #f4f4f4; }
.more { display: grid; place-items: center; width: 42px; height: 94px; margin-left: 5px; border: 1px solid #505050; border-radius: 0 8px 8px 0; }
.mini { width: 125px; height: 75px; background: #fff; outline: 1px solid #dadada; --grid: #dcdcdc; --axis: #a8a8a8; --third: #c4c4c4; --ink: #9a9a9a; }
.mini text { font-size: 7px; text-anchor: middle; fill: #666; }
.mini .b { font-weight: 700; fill: #444; }
.silver { background: linear-gradient(120deg, #a8a8a8, #f4f4f4 45%, #c4c4c4); --grid: #c4c4c4; --axis: #404040; --ink: #6a6a6a; }
.thick { --third: #858585; --axis: #808080; }
.blue { --grid: #dbe4f0; --ink: #8290ac; --third: #b8b8b8; }
.blue .b { fill: #1f3864; }
.dark { background: #3a3a3a; --grid: #5c5c5c; --axis: #b0b0b0; --third: #777; --ink: #aaa; }
.dark .b { fill: #fff; }

/* Formula bar */
.formula { display: flex; align-items: center; height: 33px; margin: 13px 9px 11px; font-size: 20px; }
.namebox, .fxbox, .fbar { display: flex; align-items: center; height: 33px; border: 1px solid #dcdcdc; border-radius: 6px; background: #fff; }
.namebox { width: 157px; padding: 0 6px 0 4px; }
.namebox input { flex: 1; width: 0; }
.dots { display: flex; flex-direction: column; align-items: center; gap: 3px; width: 33px; }
.dots i { width: 4px; height: 4px; background: #444; }
.fxbox { width: 113px; justify-content: space-between; padding: 0 7px 0 9px; margin-right: 7px; }
.fx { font: italic 400 28px/26px "Liberation Serif", serif; color: #222; }
.fbar { flex: 1; padding-right: 6px; }
.fbar input { flex: 1; }

/* Worksheet */
.workspace { display: grid; grid-template-columns: 1fr 26px; flex: 1; }
.sheet { position: relative; background: #fff; overflow: hidden; }
.grid { width: 100%; table-layout: fixed; border-collapse: separate; border-spacing: 0; }
.grid th, .grid td { padding: 0; font-weight: 400; line-height: 24px; height: 30px; }
.c-row { width: 40px; } .c-a { width: 43px; } .c-wide { width: 246px; } .c-n { width: 103px; }
.grid th { font-size: 20px; color: #111; background: #efefef; }
.grid thead th { border-right: 1px solid #c4c4c4; border-bottom: 1px solid #c4c4c4; padding-top: 2px; }
.grid tbody th { border-right: 1px solid #c4c4c4; border-bottom: 1px solid #c4c4c4; vertical-align: bottom; padding-bottom: 2px; }
.grid .corner { padding: 0; }
.corner svg { margin-left: 11px; }
.grid .heading th { height: 81px; }
.grid .title { padding: 0 0 22px 107px; vertical-align: bottom; font: italic 700 37px/36px "Open Sans", "Noto Sans", sans-serif; color: #177d47; white-space: nowrap; }
.grid .years th, .grid .years td, .grid .d th, .grid .d td { height: 32px; }
.grid .blank { border: 1px solid #7dbb9c; }
.grid .y { background: #217750; color: #eef2ff; font-size: 24px; font-weight: 700; text-align: center; border: solid #8d5bb5; border-width: 2px 0; }
.grid .first { border-left-width: 2px; }
.grid .d td:nth-child(n+4) { background: #e9eef8; color: #111; font: 24px/24px Lato, sans-serif; text-align: center; border: solid #6fae8e; border-width: 0 1px 1px 0; }
.grid .d .m { background: #267541; color: #f3ebe2; font: italic 700 24px/24px "Open Sans", "Noto Sans", sans-serif; padding: 0 0 2px 2px; border: solid #d9534f; border-width: 0 2px 0 2px; box-shadow: inset 0 -1px #a9c9b1; }
.grid .d .top { border-top-width: 2px; }
.grid .last .m { border-bottom-width: 2px; }
.grid .last td:nth-child(n+4) { border-bottom: 2px solid #3f72c8; }

.vscroll { display: flex; flex-direction: column; align-items: center; padding: 8px 0 6px; background: #f4f4f4; border-left: 1px solid #e0e0e0; border-radius: 0 12px 0 0; }
.vscroll .thumb { width: 13px; flex: 1; margin: 7px 0 36px; border-radius: 7px; background: #6f6f6f; }

/* Chart */
.chart { position: absolute; left: 1089px; top: 130px; }
.chart text { fill: #595959; font-size: 16px; }
.chart .ct { font-size: 25px; text-anchor: middle; }
.chart .val text { text-anchor: end; }
.chart .cat text { text-anchor: middle; font-size: 17px; }
.chart-tools { position: absolute; left: 2473px; top: 140px; display: grid; gap: 16px; }
.chart-tools button { display: grid; place-items: center; width: 44px; height: 44px; border: 1px solid #666; background: #fff; }
.chart-tools .on { background: #ababab; border-color: #3d8a5e; }

/* Chart filter flyout */
.filter { position: absolute; left: 734px; top: 269px; width: 355px; padding: 0 12px 0 13px; border: 1px solid #6a6a6a; background: #fff; font-size: 17px; }
.notch { position: absolute; right: -7px; top: 7px; }
.ftabs { display: flex; gap: 38px; height: 57px; }
.ftabs button { height: 57px; padding-bottom: 0; border-bottom: 3px solid transparent; padding-top: 4px; }
.ftabs .active { font-weight: 700; border-color: #147d41; }
.fbody { display: flex; height: 571px; margin-top: 7px; padding-right: 2px; }
.flist { flex: 1; overflow: hidden; }
.fgroup { display: flex; align-items: center; gap: 10px; height: 32px; padding-left: 7px; font-weight: 700; }
.fitems { display: grid; grid-auto-rows: 1fr; height: 548px; padding-left: 36px; }
.fitems label { display: flex; align-items: center; line-height: 22px; }
.fitems i { width: 10px; height: 19px; margin-right: 15px; }
.fitems input { appearance: none; display: grid; place-items: center; width: 20px; height: 20px; margin: 0 15px 6px 0; border: 2px solid #858585; border-radius: 3px; background: #fff; }
.fitems input:checked { background: #147d41; border-color: #147d41; }
.fitems input:checked::before { content: ""; width: 11px; height: 6px; border: solid #fff; border-width: 0 0 2px 2px; transform: rotate(-45deg); margin-bottom: 4px; }
.fitems .mixed::before { content: ""; width: 8px; height: 8px; border-radius: 1px; background: #222; }
.s1 { background: #4472c4; } .s2 { background: #ed803d; } .s3 { background: #a5a5a5; } .s4 { background: #ffc02e; }
.s5 { background: #5b9bd5; } .s6 { background: #70ad47; } .s7 { background: #264478; } .s8 { background: #9e480e; }
.s9 { background: #636363; } .s10 { background: #997314; } .s11 { background: #2a5d92; }
.fscroll { display: flex; flex-direction: column; align-items: center; width: 27px; height: 565px; padding: 8px 0; background: #f4f4f4; }
.fscroll .thumb { width: 14px; height: 341px; margin: 8px 0 auto; background: #6f6f6f; }
.ffoot { display: flex; align-items: center; justify-content: space-between; height: 56px; margin-top: 2px; padding: 3px 8px 0 6px; border-top: 1px solid #ccc; }
.ffoot button { height: 40px; width: 119px; border: 3px solid #000; background: #f3f3f3; }
.ffoot a { color: #1b8046; text-decoration: underline; }

/* Sheet tabs */
.sheetbar { display: flex; align-items: center; height: 52px; padding: 0 25px 0 6px; border-top: 1px solid #dedede; border-bottom: 2px solid #d4d4d4; font-size: 20px; }
.nav { display: grid; place-items: center; width: 51px; height: 40px; }
.stab { width: 143px; height: 29px; border-left: 1px solid #c8c8c8; padding-top: 2px; white-space: nowrap; }
.stab.active { align-self: flex-start; width: 127px; height: 44px; margin: 0 7px 0 55px; padding: 0; border: 0; border-radius: 0 0 8px 8px; background: #fff; font-weight: 600; }
.stab.active span { display: inline-block; line-height: 28px; border-bottom: 3px solid #147d41; }
.add { display: grid; place-items: center; width: 150px; height: 29px; border-left: 1px solid #c8c8c8; }
.sheetbar .dots { margin-left: auto; gap: 3px; width: 55px; }
.hscroll { display: flex; align-items: center; flex: 0 1 962px; height: 26px; padding: 0 7px; border-radius: 13px; background: #f5f5f5; }
.hscroll .thumb { flex: 1; height: 14px; margin: 0 75px 0 8px; border-radius: 7px; background: #6f6f6f; }

/* Status bar */
.status { display: flex; align-items: center; height: 46px; padding: 0 16px 0 24px; background: #f4f4f4; font-size: 16px; }
.ready { width: 144px; padding-top: 2px; }
.access { display: flex; align-items: center; gap: 5px; padding-top: 2px; font-weight: 700; }
.views { display: flex; align-self: stretch; margin-left: auto; }
.views button { display: grid; place-items: center; width: 65px; }
.views .on { background: #dedede; }
.zbtn { display: grid; place-items: center; width: 26px; height: 30px; }
.zoom { appearance: none; width: 154px; height: 18px; margin: 0 3px; background: linear-gradient(#666, #666) center / 100% 2px no-repeat; }
.zoom::-webkit-slider-thumb { appearance: none; width: 8px; height: 18px; background: #606060; }
.pct { margin-left: 22px; width: 42px; padding-top: 2px; }
```
